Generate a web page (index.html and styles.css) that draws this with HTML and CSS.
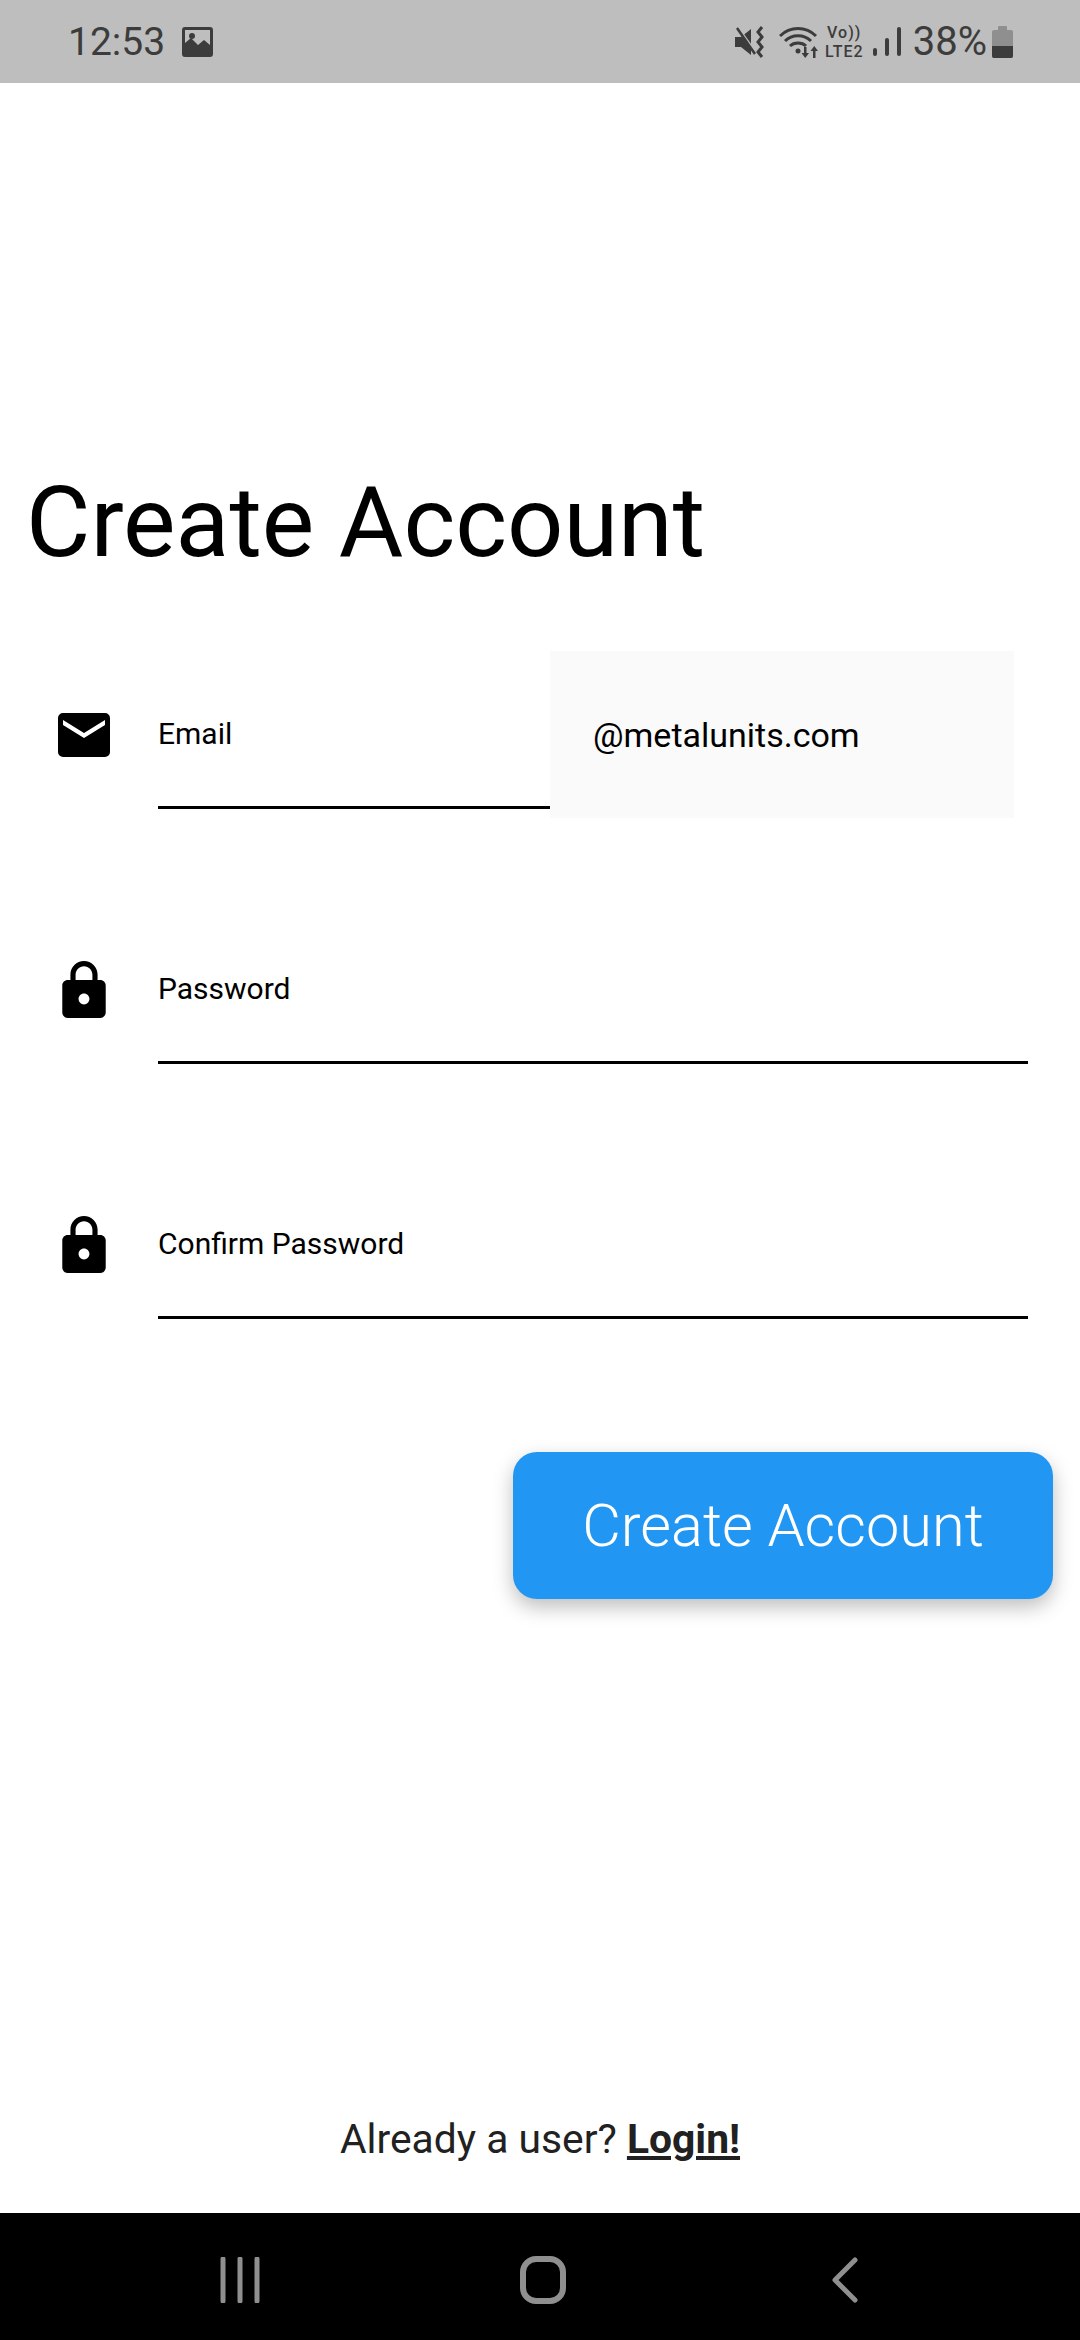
FILE: index.html

```html
<!DOCTYPE html>
<html lang="en">
<head>
    <meta charset="UTF-8">
    <meta name="viewport" content="width=device-width, initial-scale=1.0">
    <title>Create Account</title>
    <link rel="stylesheet" href="styles.css">
</head>
<body>
    <div class="status-bar">
        <div class="status-left">
            <span class="clock">12:53</span>
            <svg class="ic-image" viewBox="0 0 31 30">
                <path fill-rule="evenodd" d="M3 0h25a3 3 0 0 1 3 3v24a3 3 0 0 1-3 3H3a3 3 0 0 1-3-3V3a3 3 0 0 1 3-3zM3 3v13l6-5 7 7 6-5 6 5V3z"/>
                <circle cx="10" cy="9" r="3"/>
            </svg>
        </div>
        <div class="status-right">
            <svg class="ic-mute" viewBox="0 0 32 32">
                <path d="M0 11h6l10-8v26l-10-8H0z"/>
                <path d="M2 1l18 25" stroke="#bebebe" stroke-width="3" fill="none"/>
                <path d="M2 2l18 26" stroke="#3c3c3c" stroke-width="2.5" fill="none"/>
                <path d="M27 1l-4 5 4 5-4 5 4 5-4 5 4 5" stroke="#3c3c3c" stroke-width="3" fill="none"/>
            </svg>
            <svg class="ic-wifi" viewBox="0 0 41 32">
                <g fill="none" stroke="#3c3c3c" stroke-width="3">
                    <path d="M1 10c10-10 26-10 36 0"/>
                    <path d="M6 15c7-7 19-7 26 0"/>
                    <path d="M11 20c4-4 12-4 16 0"/>
                </g>
                <circle cx="19" cy="25" r="2.5"/>
                <path d="M25 21h2.500v6h2.500l-3.750 5-3.750-5h2.500zM34 32h2.500v-7h2.500l-3.750-5-3.750 5h2.500z"/>
            </svg>
            <div class="volte">
                <span class="volte-top">Vo))</span>
                <span class="volte-bottom">LTE2</span>
            </div>
            <div class="signal">
                <span class="signal-bar bar-1"></span>
                <span class="signal-bar bar-2"></span>
                <span class="signal-bar bar-3"></span>
            </div>
            <span class="percent">38%</span>
            <div class="battery">
                <span class="battery-cap"></span>
                <span class="battery-body"><span class="battery-level"></span></span>
            </div>
        </div>
    </div>

    <div class="screen">
        <h1 class="title">Create Account</h1>

        <div class="row">
            <svg class="ic-mail" viewBox="0 0 52 44">
                <path fill-rule="evenodd" d="M5 0h42a5 5 0 0 1 5 5v34a5 5 0 0 1-5 5H5a5 5 0 0 1-5-5V5a5 5 0 0 1 5-5zM5 7v5l21 13 21-13V7L26 20z"/>
            </svg>
            <div class="field field-short">
                <span class="field-label">Email</span>
            </div>
            <div class="suffix">@metalunits.com</div>
        </div>

        <div class="row">
            <svg class="ic-lock" viewBox="4 1 16 21">
                <path d="M18 8h-1V6c0-2.760-2.240-5-5-5S7 3.240 7 6v2H6c-1.100 0-2 .9-2 2v10c0 1.100.9 2 2 2h12c1.100 0 2-.9 2-2V10c0-1.100-.9-2-2-2zm-6 9c-1.100 0-2-.9-2-2s.9-2 2-2 2 .9 2 2-.9 2-2 2zm3.100-9H8.900V6c0-1.710 1.390-3.100 3.100-3.100 1.710 0 3.100 1.390 3.100 3.100v2z"/>
            </svg>
            <div class="field">
                <span class="field-label">Password</span>
            </div>
        </div>

        <div class="row">
            <svg class="ic-lock" viewBox="4 1 16 21">
                <path d="M18 8h-1V6c0-2.760-2.240-5-5-5S7 3.240 7 6v2H6c-1.100 0-2 .9-2 2v10c0 1.100.9 2 2 2h12c1.100 0 2-.9 2-2V10c0-1.100-.9-2-2-2zm-6 9c-1.100 0-2-.9-2-2s.9-2 2-2 2 .9 2 2-.9 2-2 2zm3.100-9H8.900V6c0-1.710 1.390-3.100 3.100-3.100 1.710 0 3.100 1.390 3.100 3.100v2z"/>
            </svg>
            <div class="field">
                <span class="field-label">Confirm Password</span>
            </div>
        </div>

        <div class="actions">
            <button class="create-btn" type="button">Create Account</button>
        </div>

        <p class="login-line">Already a user? <a class="login-link" href="#">Login!</a></p>
    </div>

    <div class="nav-bar">
        <svg class="nav-recent" viewBox="0 0 40 46">
            <path d="M3 2v42M20 2v42M37 2v42" stroke="#8f8f8f" stroke-width="5" stroke-linecap="round" fill="none"/>
        </svg>
        <svg class="nav-home" viewBox="0 0 46 48">
            <rect x="3" y="3" width="40" height="42" rx="13" stroke="#8f8f8f" stroke-width="6" fill="none"/>
        </svg>
        <svg class="nav-back" viewBox="0 0 27 46">
            <path d="M24 3L4 23l20 20" stroke="#8f8f8f" stroke-width="5" stroke-linecap="round" stroke-linejoin="round" fill="none"/>
        </svg>
    </div>
</body>
</html>
```

FILE: styles.css

```css
* {
    box-sizing: border-box;
}
body {
    margin: 0;
    width: 1080px;
    height: 2340px;
    display: flex;
    flex-direction: column;
    background: #fff;
    font-family: Roboto, "Liberation Sans", sans-serif;
    color: #000;
}

/* status bar */
.status-bar {
    height: 83px;
    flex: none;
    display: flex;
    justify-content: space-between;
    align-items: center;
    background: #bebebe;
    color: #3c3c3c;
    padding: 0 67px 0 68px;
}
.status-left, .status-right {
    display: flex;
    align-items: center;
}
.status-bar svg {
    fill: #3c3c3c;
    display: block;
}
.clock {
    font-size: 39px;
    line-height: 44px;
}
.ic-image {
    width: 31px;
    height: 30px;
    margin-left: 17px;
}
.ic-mute {
    width: 32px;
    height: 32px;
}
.ic-wifi {
    width: 41px;
    height: 32px;
    margin-left: 12px;
}
.volte {
    width: 41px;
    display: flex;
    flex-direction: column;
    align-items: center;
    margin-left: 4px;
    font-size: 16px;
    line-height: 19px;
    font-weight: 500;
    letter-spacing: 1px;
    white-space: nowrap;
}
.signal {
    display: flex;
    align-items: flex-end;
    gap: 8px;
    height: 29px;
    margin-left: 8px;
}
.signal-bar {
    width: 4px;
    background: #3c3c3c;
    border-radius: 2px;
}
.bar-1 { height: 8px; }
.bar-2 { height: 18px; }
.bar-3 { height: 29px; }
.percent {
    font-size: 40px;
    line-height: 44px;
    margin-left: 12px;
}
.battery {
    display: flex;
    flex-direction: column;
    align-items: center;
    margin-left: 5px;
}
.battery-cap {
    width: 9px;
    height: 4px;
    background: #8f8f8f;
    border-radius: 1px 1px 0 0;
}
.battery-body {
    width: 21px;
    height: 28px;
    background: #8f8f8f;
    border-radius: 2px;
    display: flex;
    align-items: flex-end;
    overflow: hidden;
}
.battery-level {
    width: 100%;
    height: 12px;
    background: #3c3c3c;
}

/* form */
.screen {
    flex: 1;
    display: flex;
    flex-direction: column;
    padding-top: 388px;
}
.title {
    margin: 0 0 78px 26px;
    font-size: 99px;
    line-height: 102px;
    font-weight: 400;
}
.row {
    height: 167px;
    margin-bottom: 88px;
    display: flex;
    align-items: center;
    padding-right: 52px;
}
.row svg {
    flex: none;
    display: block;
}
.ic-mail {
    width: 52px;
    height: 44px;
    margin: 0 48px 0 58px;
}
.ic-lock {
    width: 44px;
    height: 57px;
    margin: 0 52px 0 62px;
}
.field {
    flex: 1;
    align-self: flex-start;
    height: 158px;
    padding-top: 10px;
    display: flex;
    align-items: center;
    border-bottom: 3px solid #000;
}
.field-short {
    flex: none;
    width: 392px;
}
.field-label {
    font-size: 30px;
    line-height: 36px;
}
.suffix {
    width: 464px;
    height: 167px;
    padding-left: 43px;
    display: flex;
    align-items: center;
    background: #fafafa;
    font-size: 34px;
}
.actions {
    display: flex;
    justify-content: flex-end;
    padding-right: 27px;
    margin-top: 36px;
}
.create-btn {
    width: 540px;
    height: 147px;
    border: none;
    border-radius: 24px;
    background: #2196f3;
    color: #fff;
    font-family: Roboto, "Liberation Sans", sans-serif;
    font-size: 59.500px;
    font-weight: 300;
    box-shadow: 0 8px 20px rgba(0, 0, 0, 0.26);
    padding: 0;
}
.login-line {
    margin: auto 0 51px;
    text-align: center;
    font-size: 40.800px;
    line-height: 46px;
    color: #212121;
}
.login-link {
    color: #212121;
    font-weight: 700;
    text-decoration: underline;
}

/* nav bar */
.nav-bar {
    height: 127px;
    flex: none;
    display: flex;
    align-items: center;
    justify-content: space-between;
    background: #000;
    padding: 6px 222px 0 220px;
}
.nav-recent {
    width: 40px;
    height: 46px;
}
.nav-home {
    width: 46px;
    height: 48px;
    margin-right: 6px;
}
.nav-back {
    width: 27px;
    height: 46px;
}
```
